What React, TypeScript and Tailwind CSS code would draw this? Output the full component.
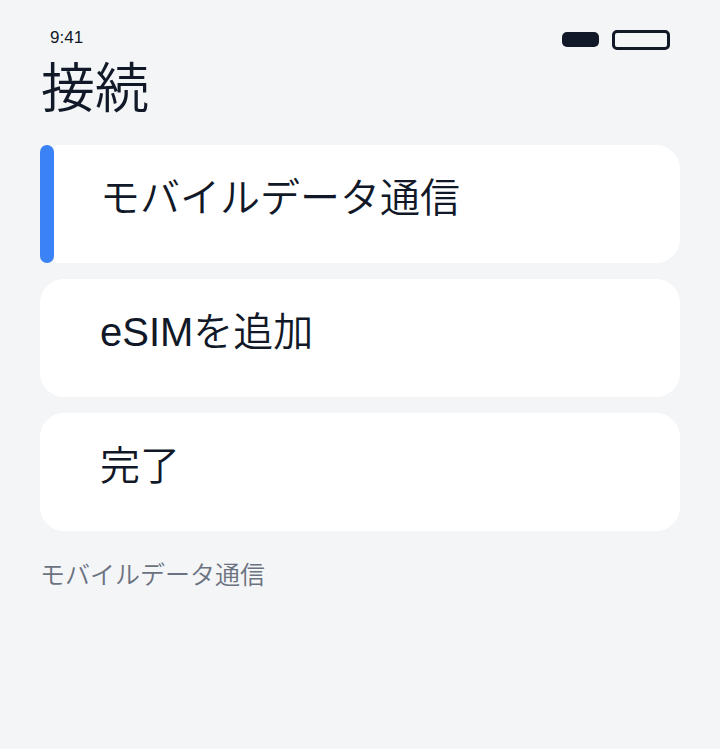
import React from 'react';

const FONT = { fontFamily: '"Liberation Sans", "Noto Sans CJK JP", sans-serif' };

const ITEMS = [
  { id: 'mobile', label: 'モバイルデータ通信' },
  { id: 'esim', label: 'eSIMを追加' },
  { id: 'done', label: '完了' },
];

export default function App() {
  const active = 'mobile';
  return (
    <div className="min-h-[749px] w-[720px] bg-[#f4f5f7] text-[#111827]" style={FONT}>
      {/* Status bar */}
      <div className="flex items-center justify-between pl-[50px] pr-[50px] pt-[27px] h-[52px]">
        <span className="text-[17px] leading-none -mt-[4px] font-[350]">9:41</span>
        <div className="flex items-center gap-[13px]">
          <div className="w-[37px] h-[15px] rounded-[5px] bg-[#111827]" />
          <div className="w-[58px] h-[20px] rounded-[5px] border-[3px] border-[#111827]" />
        </div>
      </div>

      {/* Title */}
      <h1 className="pl-[41px] text-[54px] leading-none mt-[10px] font-[350]">接続</h1>

      {/* Options */}
      <div className="flex flex-col gap-4 px-[40px] mt-[29px]">
        {ITEMS.map(item =>
          item.id === active ? (
            <div key={item.id} className="flex h-[118px]">
              <div className="w-[14px] rounded-full bg-[#3b82f6] flex-shrink-0" />
              <div className="flex-1 flex items-center bg-white rounded-r-3xl rounded-l-[4px] pl-[46px] pb-[12px]">
                <span className="text-[40px] leading-none font-[350]">{item.label}</span>
              </div>
            </div>
          ) : (
            <div key={item.id} className="flex items-center h-[118px] bg-white rounded-3xl pl-[60px] pb-[12px]">
              <span className="text-[40px] leading-none font-[350]">{item.label}</span>
            </div>
          )
        )}
      </div>

      {/* Caption */}
      <p className="px-[40px] mt-[32px] text-[25px] leading-none text-[#6b7280] font-[350]">モバイルデータ通信</p>
    </div>
  );
}
